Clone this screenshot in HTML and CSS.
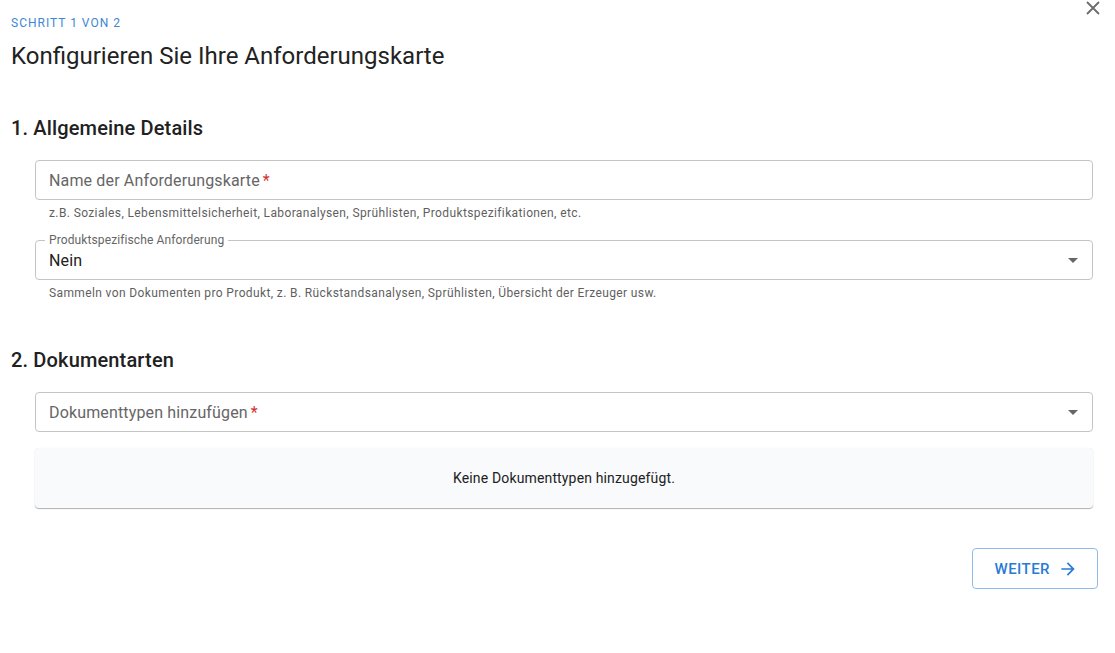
FILE: index.html
```html
<!DOCTYPE html>
<html lang="de">
<head>
  <meta charset="UTF-8">
  <meta name="viewport" content="width=device-width, initial-scale=1.0">
  <title>Anforderungskarte konfigurieren</title>
  <link rel="stylesheet" href="styles.css">
</head>
<body>
  <div class="dialog">
    <button class="close-button" aria-label="Schließen">
      <svg width="14" height="14" viewBox="0 0 14 14"><path d="M1 1L13 13M13 1L1 13" stroke="#6b6b6b" stroke-width="1.8" fill="none"/></svg>
    </button>

    <div class="step-label">Schritt 1 von 2</div>
    <h1 class="dialog-title">Konfigurieren Sie Ihre Anforderungskarte</h1>

    <h2 class="section-title">1. Allgemeine Details</h2>
    <div class="section-body">
      <div class="field">
        <div class="input-box">
          <span class="placeholder">Name der Anforderungskarte<span class="required">*</span></span>
        </div>
        <div class="helper">z.B. Soziales, Lebensmittelsicherheit, Laboranalysen, Sprühlisten, Produktspezifikationen, etc.</div>
      </div>

      <div class="field">
        <div class="input-box select-box">
          <span class="notch-label">Produktspezifische Anforderung</span>
          <span class="value">Nein</span>
          <span class="caret"></span>
        </div>
        <div class="helper">Sammeln von Dokumenten pro Produkt, z. B. Rückstandsanalysen, Sprühlisten, Übersicht der Erzeuger usw.</div>
      </div>
    </div>

    <h2 class="section-title second">2. Dokumentarten</h2>
    <div class="section-body">
      <div class="input-box select-box">
        <span class="placeholder">Dokumenttypen hinzufügen<span class="required">*</span></span>
        <span class="caret"></span>
      </div>
      <div class="empty-card">Keine Dokumenttypen hinzugefügt.</div>
    </div>

    <div class="actions">
      <button class="next-button">
        Weiter
        <svg width="20" height="20" viewBox="0 0 24 24"><path d="M12 4l-1.41 1.41L16.17 11H4v2h12.17l-5.58 5.59L12 20l8-8z" fill="currentColor"/></svg>
      </button>
    </div>
  </div>
</body>
</html>
```

FILE: styles.css
```css
* {
  margin: 0;
  padding: 0;
  box-sizing: border-box;
}

body {
  font-family: Roboto, 'Liberation Sans', sans-serif;
  background: #fff;
  color: #212121;
}

.dialog {
  position: relative;
  width: 1115px;
  padding: 15px 22px 0 11px;
}

.close-button {
  position: absolute;
  top: 1px;
  right: 15px;
  width: 14px;
  height: 14px;
  border: none;
  background: none;
  cursor: pointer;
  display: flex;
}

.step-label {
  font-size: 12px;
  letter-spacing: 1px;
  text-transform: uppercase;
  color: #3d87d6;
  line-height: 16px;
}

.dialog-title {
  font-size: 24px;
  font-weight: 400;
  line-height: 32px;
  margin-top: 9px;
  color: #222;
}

.section-title {
  font-size: 20px;
  font-weight: 500;
  line-height: 28px;
  letter-spacing: 0.15px;
  margin-top: 42px;
  color: #212121;
}

.section-title.second {
  margin-top: 45px;
}

.section-body {
  padding-left: 24px;
  margin-top: 18px;
}

.field + .field {
  margin-top: 19px;
}

.input-box {
  position: relative;
  height: 40px;
  border: 1px solid #c4c4c4;
  border-radius: 4px;
  padding: 0 13px;
  display: flex;
  align-items: center;
}

.notch-label {
  position: absolute;
  left: 9px;
  top: -8px;
  padding: 0 4px;
  background: #fff;
  font-size: 12px;
  line-height: 14px;
  letter-spacing: 0.11px;
  color: #666;
}

.value {
  font-size: 16px;
  letter-spacing: 0.15px;
  color: #212121;
}

.placeholder {
  font-size: 16px;
  letter-spacing: 0.15px;
  color: #666;
}

.required {
  color: #d32f2f;
  margin-left: 3px;
}

.caret {
  position: absolute;
  right: 14px;
  top: 50%;
  margin-top: -2px;
  width: 0;
  height: 0;
  border-left: 5px solid transparent;
  border-right: 5px solid transparent;
  border-top: 5px solid #666;
}

.helper {
  font-size: 12px;
  color: #5f5f5f;
  padding-left: 14px;
  margin-top: 5px;
  line-height: 16px;
  letter-spacing: 0.38px;
}

.empty-card {
  margin-top: 16px;
  height: 60px;
  background: #f9fafc;
  border-radius: 4px;
  box-shadow: 0 1px 1px rgba(0, 0, 0, 0.3), 0 0 1px rgba(0, 0, 0, 0.08);
  display: flex;
  align-items: center;
  justify-content: center;
  font-size: 14px;
  letter-spacing: 0.15px;
  color: #212121;
}

.actions {
  display: flex;
  justify-content: flex-end;
  margin-top: 40px;
  margin-right: -5px;
}

.next-button {
  display: flex;
  align-items: center;
  gap: 8px;
  height: 41px;
  padding: 0 19px 0 21px;
  border: 1px solid #90bceb;
  border-radius: 4px;
  background: #fff;
  color: #2a7bd4;
  font-family: Roboto, 'Liberation Sans', sans-serif;
  font-size: 15px;
  font-weight: 500;
  letter-spacing: 0.46px;
  text-transform: uppercase;
  cursor: pointer;
}
```
